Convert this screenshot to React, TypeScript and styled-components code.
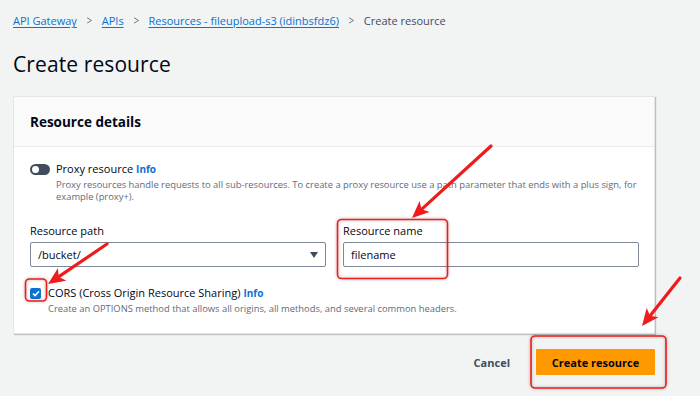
import styled, { createGlobalStyle } from "styled-components";

const GlobalStyle = createGlobalStyle`
  html, body {
    margin: 0;
    padding: 0;
    background: #f2f3f3;
    font-family: "Open Sans", "Noto Sans", sans-serif;
    color: #000716;
  }
`;

const Page = styled.div`
  position: relative;
  width: 700px;
  height: 396px;
  overflow: hidden;
  padding: 13px 45px 0 13px;
  box-sizing: border-box;
`;

const Crumbs = styled.nav`
  display: flex;
  align-items: center;
  gap: 9px;
  font-size: 11px;
  line-height: 16px;
  height: 16px;
`;

const CrumbLink = styled.a`
  color: #0972d3;
  text-decoration: underline;
  text-underline-offset: 2px;
`;

const CrumbSep = styled.span`
  color: #5f6b7a;
  font-size: 12px;
  transform: scaleX(0.8);
`;

const CrumbCurrent = styled.span`
  color: #414d5c;
`;

const Title = styled.h1`
  margin: 21px 0 0;
  font-size: 21px;
  font-weight: 400;
  line-height: 28px;
  letter-spacing: 0.1px;
`;

const Card = styled.section`
  margin-top: 18px;
  background: #fff;
  border: 1px solid #e3e5e7;
  box-shadow: 1px 1px 1px rgba(0, 7, 22, 0.22);
`;

const CardHeader = styled.header`
  height: 49px;
  display: flex;
  align-items: center;
  padding: 0 16px;
  background: #fafafa;
  border-bottom: 1px solid #e9ebed;
  font-size: 13.5px;
  font-weight: 700;
`;

const CardBody = styled.div`
  padding: 15px 16px 18px;
  display: flex;
  flex-direction: column;
`;

const OptionRow = styled.div<{ $lead: number }>`
  display: grid;
  grid-template-columns: ${(p) => p.$lead}px 1fr;
  column-gap: 6px;
  align-items: center;
`;

const OptionLabel = styled.span`
  font-size: 11px;
  line-height: 14px;
`;

const InfoLink = styled.span`
  color: #0972d3;
  font-weight: 700;
  font-size: 10px;
  margin-left: 3px;
`;

const OptionHint = styled.p`
  grid-column: 2;
  margin: 3px 0 0;
  font-size: 9.4px;
  line-height: 12px;
  color: #5f6b7a;
`;

const Toggle = styled.span`
  width: 20px;
  height: 11px;
  border-radius: 6px;
  background: #414d5c;
  position: relative;
  &::after {
    content: "";
    position: absolute;
    left: 2px;
    top: 2px;
    width: 7px;
    height: 7px;
    border-radius: 50%;
    background: #fff;
  }
`;

const Check = styled.span`
  width: 11px;
  height: 11px;
  border-radius: 2px;
  background: #0972d3;
  display: flex;
  align-items: center;
  justify-content: center;
`;

const Fields = styled.div`
  display: grid;
  grid-template-columns: 296px 296px;
  column-gap: 17px;
  margin-top: 20px;
  margin-bottom: 19px;
`;

const Field = styled.label`
  display: flex;
  flex-direction: column;
  gap: 4px;
`;

const FieldLabel = styled.span`
  font-size: 11px;
  line-height: 15px;
`;

const Box = styled.div`
  height: 25px;
  box-sizing: border-box;
  border: 1px solid #7d8998;
  border-radius: 2px;
  display: flex;
  align-items: center;
  justify-content: space-between;
  padding: 0 7px;
  font-size: 11px;
`;

const Caret = styled.span`
  width: 0;
  height: 0;
  border-left: 4.5px solid transparent;
  border-right: 4.5px solid transparent;
  border-top: 6px solid #414d5c;
`;

const Footer = styled.div`
  display: flex;
  justify-content: flex-end;
  align-items: center;
  gap: 26px;
  margin-top: 15px;
`;

const TextButton = styled.button`
  border: 0;
  background: none;
  padding: 0;
  font-family: inherit;
  font-size: 11px;
  font-weight: 700;
  color: #414d5c;
`;

const PrimaryButton = styled.button`
  width: 119px;
  height: 26px;
  border: 0;
  background: #ff9900;
  font-family: inherit;
  font-size: 11px;
  font-weight: 700;
  color: #000716;
  border-radius: 1px;
`;

const Annotations = styled.svg`
  position: absolute;
  left: 0;
  top: 0;
  pointer-events: none;
`;

const RED = "#ee1c1c";

function Arrow({ x1, y1, x2, y2 }: { x1: number; y1: number; x2: number; y2: number }) {
  const dx = x2 - x1;
  const dy = y2 - y1;
  const len = Math.hypot(dx, dy);
  const ux = dx / len;
  const uy = dy / len;
  const head = 17;
  const half = 7.5;
  const bx = x2 - ux * head;
  const by = y2 - uy * head;
  const px = -uy * half;
  const py = ux * half;
  const pts = `${x2},${y2} ${bx + px},${by + py} ${bx + ux * 4},${by + uy * 4} ${bx - px},${by - py}`;
  return (
    <g>
      <line x1={x1} y1={y1} x2={bx + ux * 3} y2={by + uy * 3} stroke={RED} strokeWidth={3.2} strokeLinecap="round" />
      <polygon points={pts} fill={RED} />
    </g>
  );
}

function Highlight({ x, y, w, h }: { x: number; y: number; w: number; h: number }) {
  return (
    <rect x={x} y={y} width={w} height={h} rx={4} fill="none" stroke={RED} strokeWidth={1.6} filter="url(#halo)" />
  );
}

export default function App() {
  return (
    <>
      <GlobalStyle />
      <Page>
        <Crumbs>
          <CrumbLink>API Gateway</CrumbLink>
          <CrumbSep>&gt;</CrumbSep>
          <CrumbLink>APIs</CrumbLink>
          <CrumbSep>&gt;</CrumbSep>
          <CrumbLink>Resources - fileupload-s3 (idinbsfdz6)</CrumbLink>
          <CrumbSep>&gt;</CrumbSep>
          <CrumbCurrent>Create resource</CrumbCurrent>
        </Crumbs>
        <Title>Create resource</Title>

        <Card>
          <CardHeader>Resource details</CardHeader>
          <CardBody>
            <OptionRow $lead={20}>
              <Toggle />
              <OptionLabel>
                Proxy resource<InfoLink>Info</InfoLink>
              </OptionLabel>
              <OptionHint>
                Proxy resources handle requests to all sub-resources. To create a proxy resource use a path parameter
                that ends with a plus sign, for example (proxy+).
              </OptionHint>
            </OptionRow>

            <Fields>
              <Field>
                <FieldLabel>Resource path</FieldLabel>
                <Box>
                  /bucket/
                  <Caret />
                </Box>
              </Field>
              <Field>
                <FieldLabel>Resource name</FieldLabel>
                <Box>filename</Box>
              </Field>
            </Fields>

            <OptionRow $lead={12}>
              <Check>
                <svg width="8" height="7" viewBox="0 0 8 7">
                  <path d="M1 3.6 L3.1 5.6 L7 1.2" fill="none" stroke="#fff" strokeWidth="1.6" />
                </svg>
              </Check>
              <OptionLabel>
                CORS (Cross Origin Resource Sharing)<InfoLink>Info</InfoLink>
              </OptionLabel>
              <OptionHint>Create an OPTIONS method that allows all origins, all methods, and several common headers.</OptionHint>
            </OptionRow>
          </CardBody>
        </Card>

        <Footer>
          <TextButton>Cancel</TextButton>
          <PrimaryButton>Create resource</PrimaryButton>
        </Footer>

        <Annotations width={700} height={396}>
          <defs>
            <filter id="halo" x="-20%" y="-20%" width="140%" height="140%">
              <feDropShadow dx="0" dy="0" stdDeviation="1.5" floodColor="#000" floodOpacity="0.35" />
            </filter>
          </defs>
          <Highlight x={337.5} y={219.5} w={110} h={59} />
          <Highlight x={25.5} y={279} w={21} h={22} />
          <Highlight x={531} y={336} w={135} h={52} />
          <Arrow x1={491} y1={146} x2={412} y2={218} />
          <Arrow x1={107} y1={244} x2={48} y2={284} />
          <Arrow x1={680} y1={278} x2={642} y2={326} />
        </Annotations>
      </Page>
    </>
  );
}
